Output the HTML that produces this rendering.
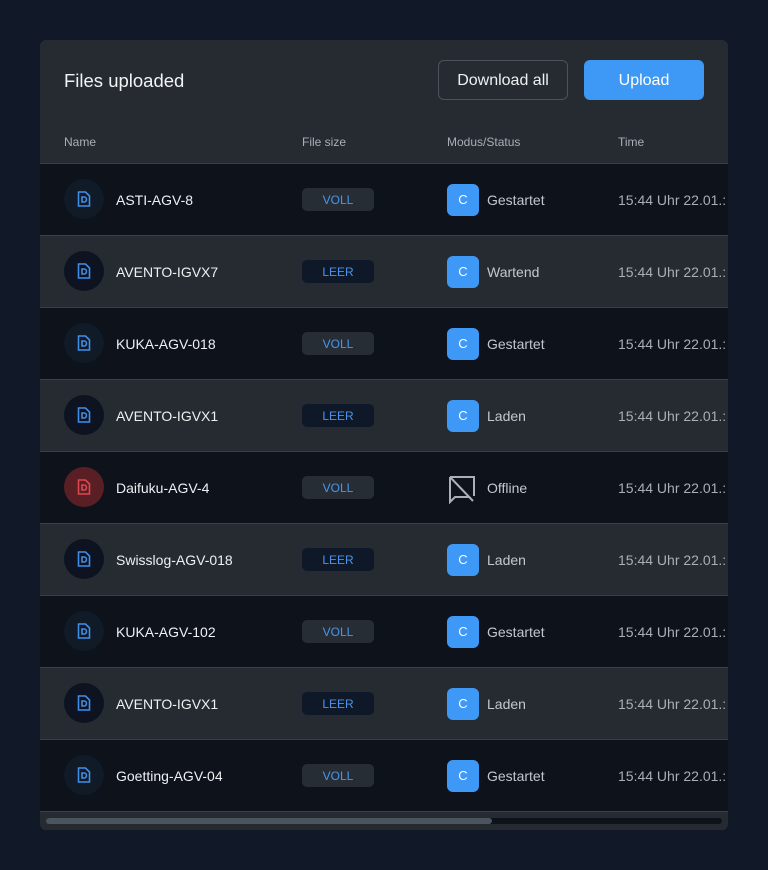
<!DOCTYPE html>
<html><head><style>
*{box-sizing:border-box;margin:0;padding:0}
body{width:768px;height:870px;background:#111827;font-family:"Liberation Sans",sans-serif;position:relative;overflow:hidden}
.card{position:absolute;left:40px;top:40px;width:688px;height:790px;background:#262b32;border-radius:6px;overflow:hidden}
.title{position:absolute;left:24px;top:30px;font-size:18.5px;color:#f1f3f5}
.btn1{position:absolute;left:398px;top:20px;width:130px;height:40px;border:1px solid #4b525b;border-radius:6px;color:#eef0f2;font-size:16px;text-align:center;line-height:40px}
.btn2{position:absolute;left:544px;top:20px;width:120px;height:40px;background:#3e98f5;border-radius:6px;color:#fff;font-size:16px;text-align:center;line-height:41px}
.th{position:absolute;top:95px;font-size:12px;color:#a9afb6}
.row{position:absolute;left:0;width:688px;height:72px;border-top:1px solid #3a4048}
.row.d{background:#0d121b}
.row.l{background:#262b32}
.ic{position:absolute;left:24px;top:15px;width:40px;height:40px;border-radius:50%;background:#111a27}
.row.l .ic{background:#0d1320}
.ic svg{position:absolute;left:13px;top:12px}
.nm{position:absolute;left:76px;top:28px;font-size:14px;color:#eef0f2}
.tag{position:absolute;left:262px;top:24px;width:72px;height:23px;border-radius:5px;font-size:12px;text-align:center;line-height:24px;color:#4a95ec}
.row.d .tag{background:#272d35}
.row.l .tag{background:#0f1828}
.c{position:absolute;left:407px;top:20px;width:32px;height:32px;border-radius:6px;background:#3e98f5;color:#fff;font-size:13px;text-align:center;line-height:32px}
.st{position:absolute;left:447px;top:28px;font-size:14px;color:#c3c8ce}
.tm{position:absolute;left:578px;top:28px;font-size:14px;color:#a9afb6;white-space:nowrap}
.sb{position:absolute;left:6px;top:778px;width:676px;height:6px;border-radius:3px;background:#0d121b}
.sb div{width:446px;height:6px;border-radius:3px;background:#4b555e}
</style></head><body>
<div class="card">
<div class="title">Files uploaded</div>
<div class="btn1">Download all</div>
<div class="btn2">Upload</div>
<div class="th" style="left:24px">Name</div>
<div class="th" style="left:262px">File size</div>
<div class="th" style="left:407px">Modus/Status</div>
<div class="th" style="left:578px">Time</div>

<div class="row d" style="top:123px"><div class="ic"><svg width="14" height="16" viewBox="0 0 14 16" fill="none" stroke="#3e8ee8" stroke-width="1.6"><path d="M1.5 1h7l4 4v10h-11z"/><path d="M5 6h2a2.5 2.5 0 0 1 0 5H5z"/></svg></div><div class="nm">ASTI-AGV-8</div><div class="tag">VOLL</div><div class="c">C</div><div class="st">Gestartet</div><div class="tm">15:44 Uhr 22.01.:</div></div>
<div class="row l" style="top:195px"><div class="ic"><svg width="14" height="16" viewBox="0 0 14 16" fill="none" stroke="#3e8ee8" stroke-width="1.6"><path d="M1.5 1h7l4 4v10h-11z"/><path d="M5 6h2a2.5 2.5 0 0 1 0 5H5z"/></svg></div><div class="nm">AVENTO-IGVX7</div><div class="tag">LEER</div><div class="c">C</div><div class="st">Wartend</div><div class="tm">15:44 Uhr 22.01.:</div></div>
<div class="row d" style="top:267px"><div class="ic"><svg width="14" height="16" viewBox="0 0 14 16" fill="none" stroke="#3e8ee8" stroke-width="1.6"><path d="M1.5 1h7l4 4v10h-11z"/><path d="M5 6h2a2.5 2.5 0 0 1 0 5H5z"/></svg></div><div class="nm">KUKA-AGV-018</div><div class="tag">VOLL</div><div class="c">C</div><div class="st">Gestartet</div><div class="tm">15:44 Uhr 22.01.:</div></div>
<div class="row l" style="top:339px"><div class="ic"><svg width="14" height="16" viewBox="0 0 14 16" fill="none" stroke="#3e8ee8" stroke-width="1.6"><path d="M1.5 1h7l4 4v10h-11z"/><path d="M5 6h2a2.5 2.5 0 0 1 0 5H5z"/></svg></div><div class="nm">AVENTO-IGVX1</div><div class="tag">LEER</div><div class="c">C</div><div class="st">Laden</div><div class="tm">15:44 Uhr 22.01.:</div></div>
<div class="row d" style="top:411px"><div class="ic" style="background:#5a1e25"><svg width="14" height="16" viewBox="0 0 14 16" fill="none" stroke="#e0464f" stroke-width="1.6"><path d="M1.5 1h7l4 4v10h-11z"/><path d="M5 6h2a2.5 2.5 0 0 1 0 5H5z"/></svg></div><div class="nm">Daifuku-AGV-4</div><div class="tag">VOLL</div><svg style="position:absolute;left:408px;top:22px" width="30" height="30" viewBox="0 0 30 30" fill="none" stroke="#aab0b7" stroke-width="2"><path d="M2 3h24v19M2 3v25l5-5h15"/><path d="M2 3l23 24"/></svg><div class="st">Offline</div><div class="tm">15:44 Uhr 22.01.:</div></div>
<div class="row l" style="top:483px"><div class="ic"><svg width="14" height="16" viewBox="0 0 14 16" fill="none" stroke="#3e8ee8" stroke-width="1.6"><path d="M1.5 1h7l4 4v10h-11z"/><path d="M5 6h2a2.5 2.5 0 0 1 0 5H5z"/></svg></div><div class="nm">Swisslog-AGV-018</div><div class="tag">LEER</div><div class="c">C</div><div class="st">Laden</div><div class="tm">15:44 Uhr 22.01.:</div></div>
<div class="row d" style="top:555px"><div class="ic"><svg width="14" height="16" viewBox="0 0 14 16" fill="none" stroke="#3e8ee8" stroke-width="1.6"><path d="M1.5 1h7l4 4v10h-11z"/><path d="M5 6h2a2.5 2.5 0 0 1 0 5H5z"/></svg></div><div class="nm">KUKA-AGV-102</div><div class="tag">VOLL</div><div class="c">C</div><div class="st">Gestartet</div><div class="tm">15:44 Uhr 22.01.:</div></div>
<div class="row l" style="top:627px"><div class="ic"><svg width="14" height="16" viewBox="0 0 14 16" fill="none" stroke="#3e8ee8" stroke-width="1.6"><path d="M1.5 1h7l4 4v10h-11z"/><path d="M5 6h2a2.5 2.5 0 0 1 0 5H5z"/></svg></div><div class="nm">AVENTO-IGVX1</div><div class="tag">LEER</div><div class="c">C</div><div class="st">Laden</div><div class="tm">15:44 Uhr 22.01.:</div></div>
<div class="row d" style="top:699px;border-bottom:1px solid #3a4048;height:73px"><div class="ic"><svg width="14" height="16" viewBox="0 0 14 16" fill="none" stroke="#3e8ee8" stroke-width="1.6"><path d="M1.5 1h7l4 4v10h-11z"/><path d="M5 6h2a2.5 2.5 0 0 1 0 5H5z"/></svg></div><div class="nm">Goetting-AGV-04</div><div class="tag">VOLL</div><div class="c">C</div><div class="st">Gestartet</div><div class="tm">15:44 Uhr 22.01.:</div></div>
<div class="sb"><div></div></div>
</div>
</body></html>
